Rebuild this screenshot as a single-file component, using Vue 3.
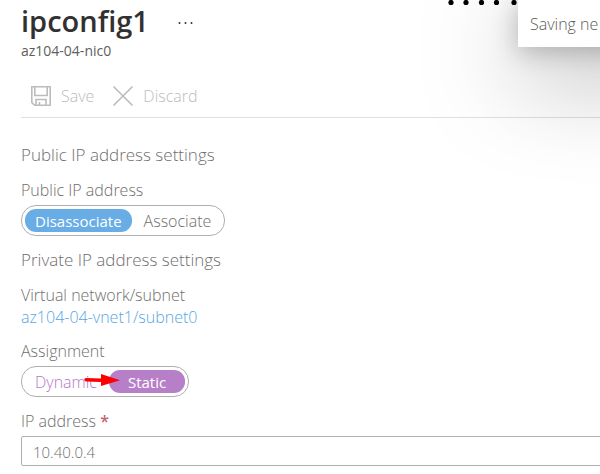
<script setup>
import { ref } from 'vue'

const publicIp = ref('Disassociate')
const assignment = ref('Static')
const ipAddress = ref('10.40.0.4')
</script>

<template>
  <main class="blade">
    <header class="head">
      <div class="title-row">
        <h1>ipconfig1</h1>
        <button class="more" type="button" aria-label="More">
          <svg width="16" height="4" viewBox="0 0 16 4"><circle cx="2.5" cy="2" r="1" /><circle cx="8.5" cy="2" r="1" /><circle cx="14.5" cy="2" r="1" /></svg>
        </button>
      </div>
      <p class="subtitle">az104-04-nic0</p>
    </header>

    <div class="toolbar">
      <button type="button" disabled>
        <svg class="icon" width="22" height="22" viewBox="0 0 22 22" fill="none" stroke="currentColor" stroke-width="1.6">
          <path d="M1.8 1.8H20.2V20.2H4.5L1.8 17.5Z" />
          <path d="M4.8 1.8V10.5H17.2V1.8" />
          <path d="M6 20V14.5H16V20M9.5 20V17" />
        </svg>
        <span>Save</span>
      </button>
      <button type="button" disabled>
        <svg class="icon" width="22" height="22" viewBox="0 0 22 22" fill="none" stroke="currentColor" stroke-width="1.6">
          <path d="M1.5 1.5L20.5 20.5M20.5 1.5L1.5 20.5" />
        </svg>
        <span>Discard</span>
      </button>
    </div>

    <form class="settings" @submit.prevent>
      <h2>Public IP address settings</h2>
      <div class="field">
        <span id="public-label" class="label">Public IP address</span>
        <div class="pill blue" role="radiogroup" aria-labelledby="public-label">
          <label v-for="o in ['Disassociate', 'Associate']" :key="o">
            <input v-model="publicIp" type="radio" name="public-ip" :value="o" />
            <span>{{ o }}</span>
          </label>
        </div>
      </div>

      <h2>Private IP address settings</h2>
      <div class="field subnet">
        <span class="label">Virtual network/subnet</span>
        <a href="#subnet">az104-04-vnet1/subnet0</a>
      </div>
      <div class="field assignment">
        <span id="assignment-label" class="label">Assignment</span>
        <div class="pill purple" role="radiogroup" aria-labelledby="assignment-label">
          <label v-for="o in ['Dynamic', 'Static']" :key="o">
            <input v-model="assignment" type="radio" name="assignment" :value="o" />
            <span>{{ o }}</span>
          </label>
          <svg class="arrow" width="36" height="12" viewBox="0 0 36 12" aria-hidden="true">
            <path d="M2 4L17 4.4V0L36 6.2L17 12V8L2 7.4A1.7 1.7 0 0 1 2 4Z" fill="#fe0000" />
          </svg>
        </div>
      </div>
      <div class="field address">
        <label class="label" for="ip">IP address <span class="required">*</span></label>
        <input id="ip" v-model="ipAddress" class="textbox" type="text" required />
      </div>
    </form>

    <svg class="progress" width="70" height="6" viewBox="0 0 70 6" aria-hidden="true">
      <circle cx="3" cy="2.5" r="2.6" /><circle cx="18" cy="2.5" r="2.6" /><circle cx="33.5" cy="2.5" r="2.6" /><circle cx="48.5" cy="2.5" r="2.6" /><circle cx="66" cy="2.5" r="2.6" />
    </svg>
    <div class="toast" role="status">Saving ne</div>
  </main>
</template>

<style>
body {
  background: #fff;
}
</style>

<style scoped>
.blade {
  position: relative;
  overflow: hidden;
  padding: 0 0 8px 21px;
  color: #6f6e6d;
  font: 350 16px/20px "Open Sans", "Noto Sans", sans-serif;
}
h1, h2, p {
  margin: 0;
}
button {
  padding: 0;
  border: 0;
  background: none;
  font: inherit;
}
.title-row {
  display: flex;
  align-items: center;
  gap: 28px;
  height: 41px;
}
h1 {
  color: #323130;
  font-size: 29px;
  font-weight: 600;
  line-height: 40px;
}
.more {
  display: flex;
  padding-top: 4px;
}
.more svg {
  fill: #323130;
}
.subtitle {
  color: #605e5c;
  font-size: 14px;
  font-weight: 400;
}
.toolbar {
  display: flex;
  gap: 18px;
  padding: 24px 0 10px 9px;
  border-bottom: 1px solid #e1e0df;
}
.toolbar button {
  display: flex;
  align-items: center;
  gap: 9px;
  color: #bdbcbb;
}
.settings {
  display: flex;
  flex-direction: column;
  padding-top: 25px;
}
h2 {
  font-size: 17px;
  font-weight: 350;
  line-height: 24px;
}
.field {
  display: flex;
  flex-direction: column;
  align-items: flex-start;
  padding: 13px 0 12px;
}
.label {
  display: block;
  height: 25px;
}
.subnet {
  padding-bottom: 1px;
}
.subnet .label {
  height: 22px;
}
.assignment {
  padding-bottom: 1px;
}
.address {
  padding-bottom: 0;
}
a {
  color: #58a5e4;
  text-decoration: none;
}
.pill {
  position: relative;
  display: flex;
  gap: 2px;
  padding: 3px;
  border: 1px solid #b0afae;
  border-radius: 15px;
}
.pill input {
  position: absolute;
  opacity: 0;
  margin: 0;
}
.pill label span {
  display: block;
  padding: 2px 10px 0;
  border-radius: 11px;
  line-height: 21px;
}
.blue input:checked + span {
  background: #68ade6;
  color: #fff;
  font-weight: 400;
  font-size: 15px;
}
.purple {
  color: #b478c7;
}
.purple label + label span {
  padding: 2px 19px 0;
}
.purple input:checked + span {
  background: #b87fc9;
  color: #fff;
  font-weight: 400;
  font-size: 15px;
}
.arrow {
  position: absolute;
  left: 62px;
  top: 7px;
}
.required {
  color: #c0666c;
  font-weight: 600;
}
.textbox {
  box-sizing: border-box;
  width: calc(100% + 4px);
  height: 30px;
  padding: 1px 11px 0;
  border: 1px solid #b0afae;
  border-radius: 2px;
  background: #fff;
  color: inherit;
  font: inherit;
  font-size: 15px;
}
.progress {
  position: absolute;
  top: 0;
  right: 82px;
}
.toast {
  position: absolute;
  top: 0;
  right: -240px;
  box-sizing: border-box;
  width: 322px;
  height: 47px;
  padding: 14px 0 0 12px;
  background: #fff;
  box-shadow: 0 26px 100px rgba(0, 0, 0, 0.36), 0 5px 26px rgba(0, 0, 0, 0.25);
  color: #5c5b5a;
  white-space: nowrap;
}
</style>
